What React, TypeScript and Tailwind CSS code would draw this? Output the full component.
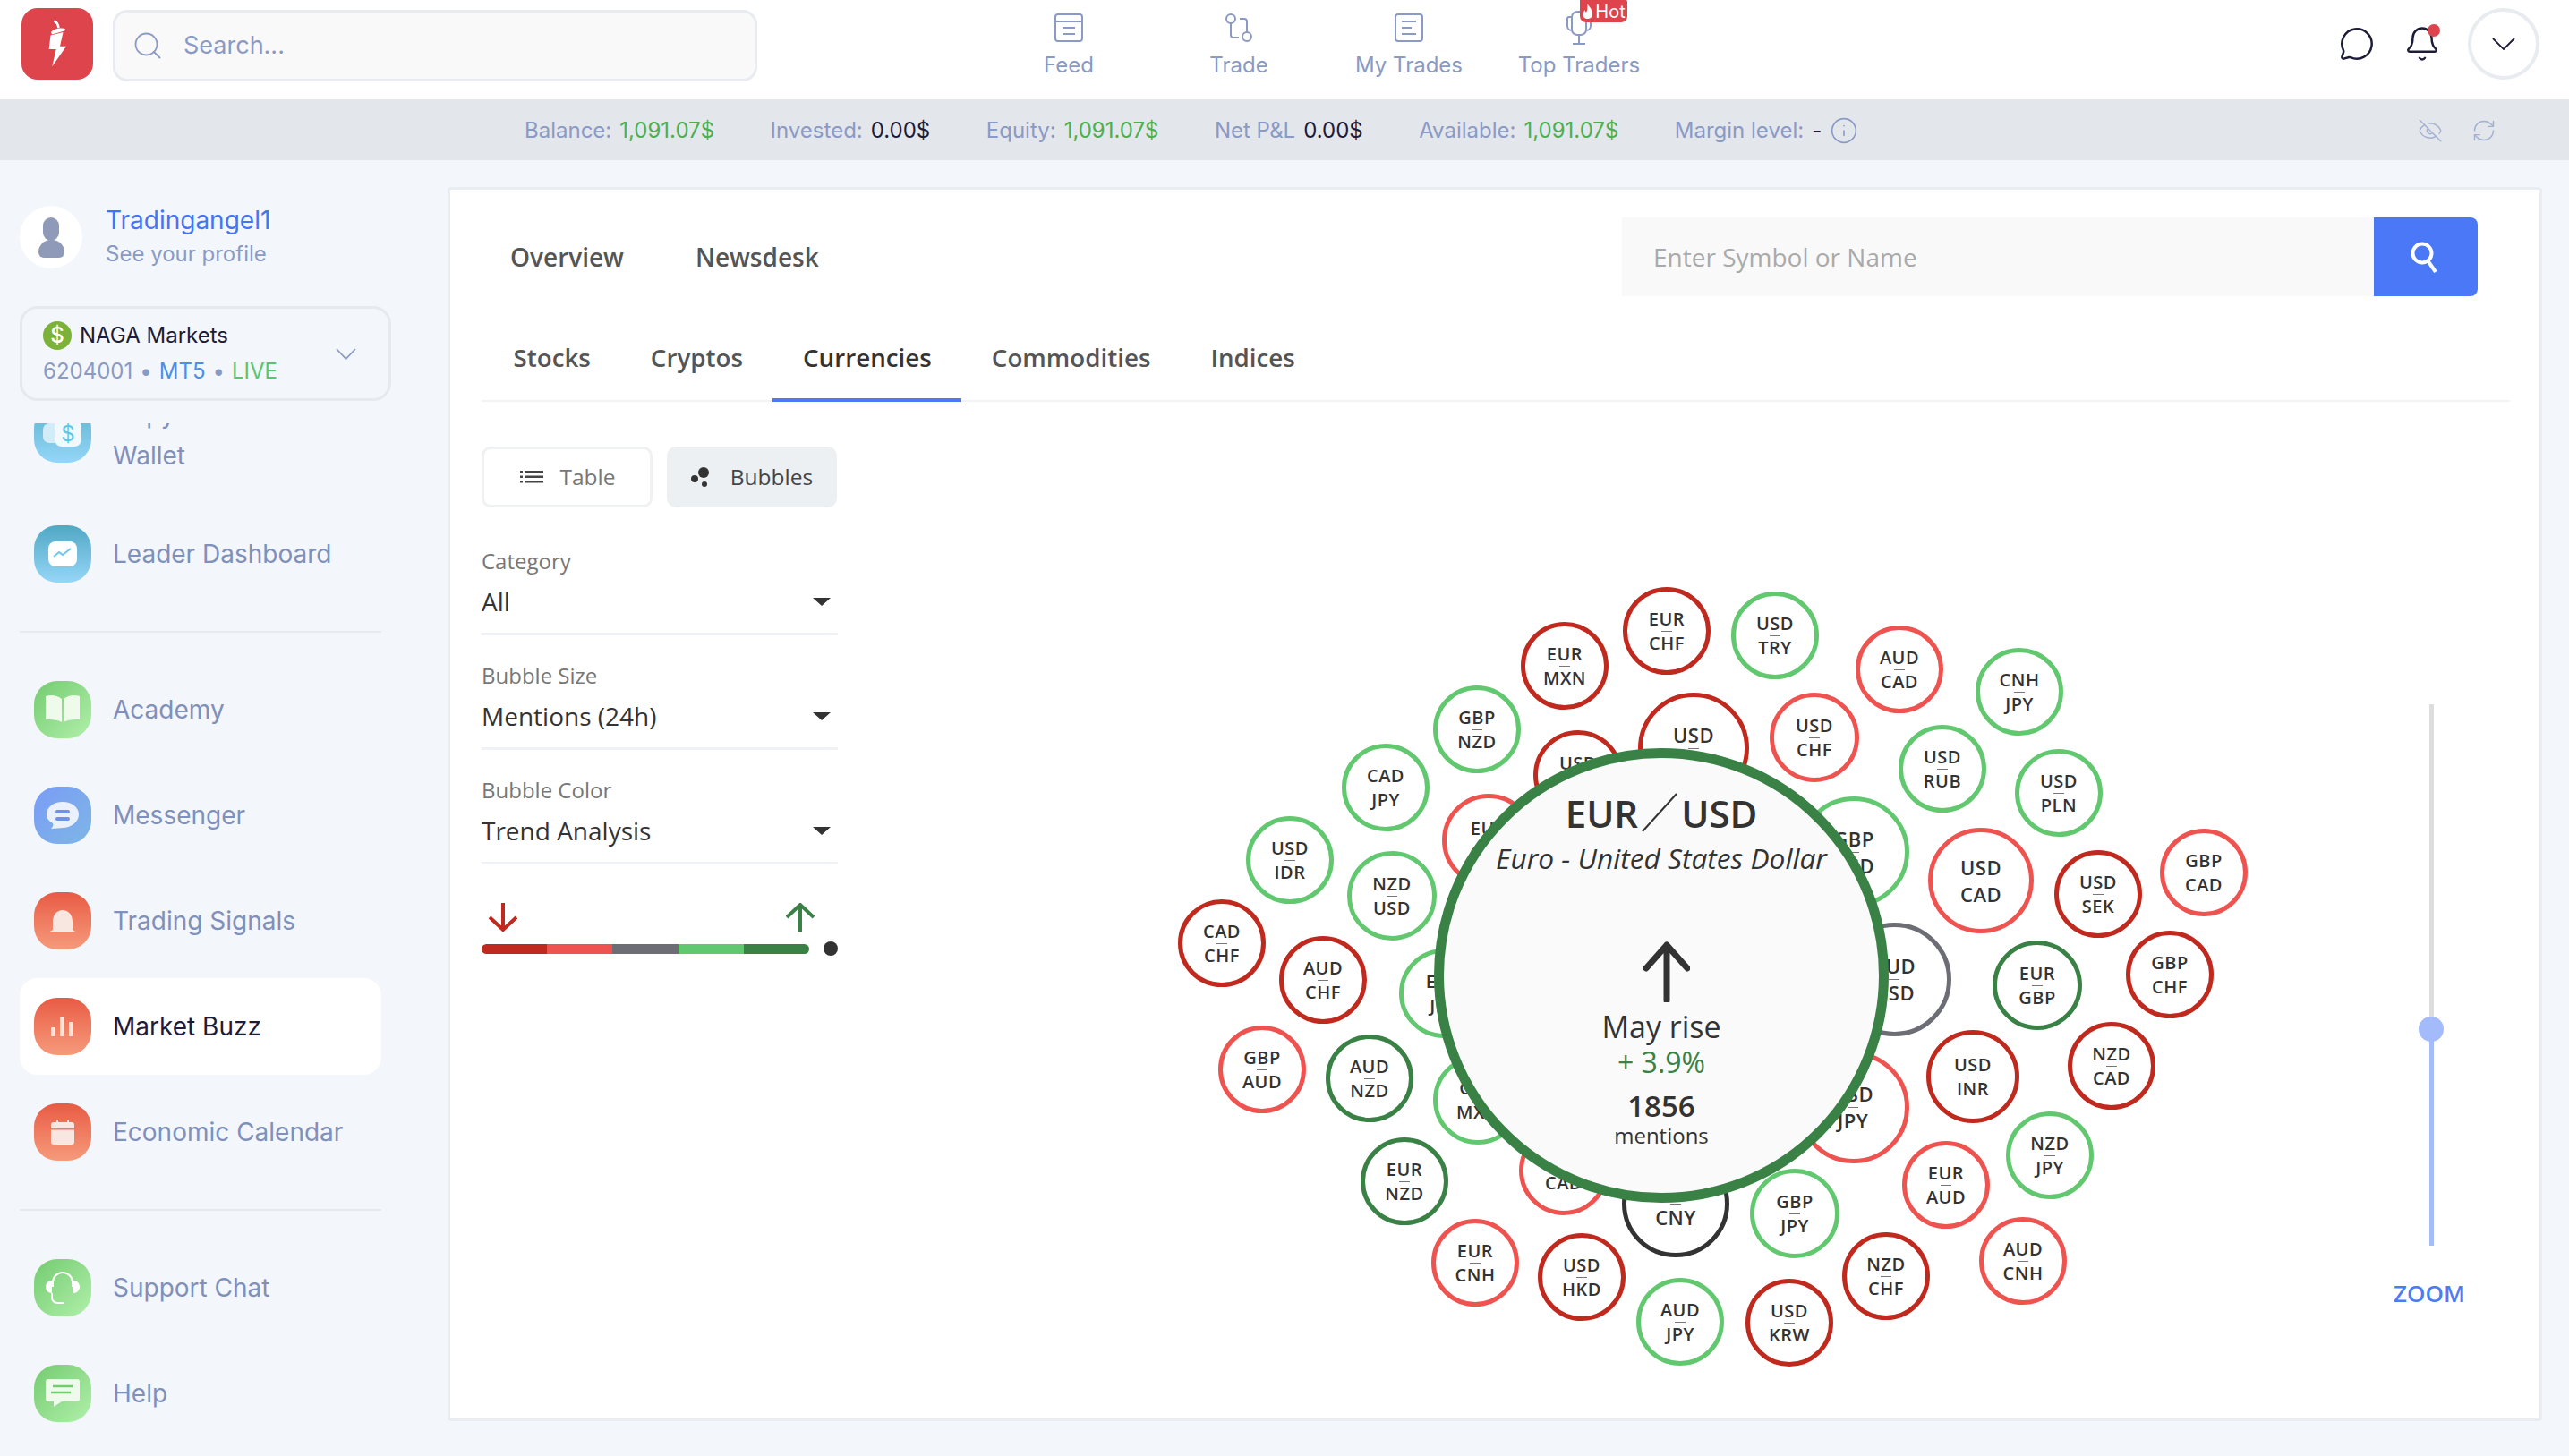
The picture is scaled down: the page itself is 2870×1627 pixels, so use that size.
import { Info, EyeOff, RefreshCw, Search, MessageCircle, Bell } from 'lucide-react';

const OX = 503;
const OY = 212;

const DR = 'border-[#c0291e]';
const LR = 'border-[#ef5350]';
const LG = 'border-[#62c870]';
const DG = 'border-[#3a8146]';
const GR = 'border-[#6d6d75]';
const BK = 'border-[#333333]';

const bubbles: [string, string, number, number, number, string][] = [
  ['EUR', 'CHF', 1862, 705, 98, DR],
  ['USD', 'TRY', 1983, 710, 98, LG],
  ['EUR', 'MXN', 1748, 744, 98, DR],
  ['AUD', 'CAD', 2122, 748, 98, LR],
  ['CNH', 'JPY', 2256, 773, 98, LG],
  ['GBP', 'NZD', 1650, 815, 98, LG],
  ['USD', 'CHF', 2027, 824, 100, LR],
  ['USD', 'RUB', 2170, 859, 98, LG],
  ['USD', 'PLN', 2300, 886, 98, LG],
  ['CAD', 'JPY', 1548, 880, 98, LG],
  ['USD', 'IDR', 1441, 961, 98, LG],
  ['NZD', 'USD', 1555, 1001, 100, LG],
  ['USD', 'CAD', 2213, 984, 118, LR],
  ['USD', 'SEK', 2344, 999, 98, DR],
  ['GBP', 'CAD', 2462, 975, 98, LR],
  ['CAD', 'CHF', 1365, 1054, 98, DR],
  ['AUD', 'CHF', 1478, 1095, 98, DR],
  ['GBP', 'CHF', 2424, 1089, 98, DR],
  ['EUR', 'GBP', 2276, 1101, 100, DG],
  ['GBP', 'AUD', 1410, 1195, 98, LR],
  ['AUD', 'NZD', 1530, 1205, 98, DG],
  ['USD', 'INR', 2204, 1203, 104, DR],
  ['NZD', 'CAD', 2359, 1191, 98, DR],
  ['EUR', 'NZD', 1569, 1320, 98, DG],
  ['EUR', 'AUD', 2174, 1324, 98, LR],
  ['NZD', 'JPY', 2290, 1291, 98, LG],
  ['GBP', 'JPY', 2005, 1356, 100, LG],
  ['EUR', 'CNH', 1648, 1411, 98, LR],
  ['USD', 'HKD', 1767, 1427, 98, DR],
  ['NZD', 'CHF', 2107, 1426, 98, DR],
  ['AUD', 'CNH', 2260, 1409, 98, LR],
  ['AUD', 'JPY', 1877, 1477, 98, LG],
  ['USD', 'KRW', 1999, 1478, 98, DR],
  ['USD', 'MXN', 1763, 866, 100, DR],
  ['EUR', 'GBP', 1663, 939, 104, LR],
  ['USD', 'JPY', 1892, 836, 124, DR],
  ['EUR', 'JPY', 1613, 1110, 100, LG],
  ['GBP', 'MXN', 1651, 1229, 100, LG],
  ['EUR', 'CAD', 1747, 1308, 100, LR],
  ['USD', 'CNY', 1872, 1345, 120, BK],
  ['GBP', 'USD', 2071, 952, 124, LG],
  ['AUD', 'USD', 2116, 1094, 127, GR],
  ['USD', 'JPY', 2070, 1237, 125, LR],
];

const FeedIcon = () => (
  <svg width="32" height="32" viewBox="0 0 32 32" fill="none" stroke="#8a9ac4" strokeWidth="2">
    <rect x="1" y="1" width="30" height="30" rx="3" />
    <path d="M1 9h30M9 16h14M9 23h14" />
  </svg>
);

const TradeIcon = () => (
  <svg width="32" height="32" viewBox="0 0 32 32" fill="none" stroke="#8a9ac4" strokeWidth="2">
    <circle cx="7" cy="6" r="5" />
    <circle cx="25" cy="26" r="5" />
    <path d="M7 11v13a3 3 0 0 0 3 3h6M17 6h5a3 3 0 0 1 3 3v12" />
  </svg>
);

const TradesIcon = () => (
  <svg width="32" height="32" viewBox="0 0 32 32" fill="none" stroke="#8a9ac4" strokeWidth="2">
    <rect x="1" y="1" width="30" height="30" rx="3" />
    <path d="M8 9h16M8 16h11M8 23h16" />
  </svg>
);

const TopTradersIcon = () => (
  <svg width="30" height="38" viewBox="0 0 30 38" fill="none" stroke="#8a9ac4" strokeWidth="2">
    <rect x="7" y="1" width="16" height="26" rx="6" />
    <path d="M7 7H4a2 2 0 0 0-2 2v8a5 5 0 0 0 5 5M23 7h3a2 2 0 0 1 2 2v8a5 5 0 0 1-5 5M15 27v9M8 37h14" />
  </svg>
);

const Logo = () => (
  <svg width="80" height="80" viewBox="0 0 80 80" className="shrink-0">
    <rect width="80" height="80" rx="18" fill="#dd444c" />
    <path d="M36.500 14.500C40 16 41 19 41.500 22" fill="none" stroke="#fff" strokeWidth="2.500" />
    <path d="M33 27c3-4 12-6 16.500-3L48 25.500l-14 4Z" fill="#fff" />
    <path d="M32.500 30.500L46.500 27 43 42.700h7L34.300 65.300 38.700 46h-8Z" fill="#fff" />
  </svg>
);

const Chevron = ({ w, h, color }: { w: number; h: number; color: string }) => (
  <svg width={w} height={h} viewBox={`0 0 ${w} ${h}`} fill="none" stroke={color} strokeWidth="1.800">
    <path d={`M1 1L${w / 2} ${h - 1}L${w - 1} 1`} />
  </svg>
);

const NavIcon = ({ bg, children }: { bg: string; children: React.ReactNode }) => (
  <div className={`w-[64px] h-[64px] rounded-[26px] shrink-0 flex items-center justify-center ${bg}`}>
    {children}
  </div>
);

const BLUE = 'bg-linear-to-b from-[#4fa8c5] to-[#95d6f7]';
const GREEN = 'bg-linear-to-br from-[#74cb70] to-[#b0f0aa]';
const ORANGE = 'bg-linear-to-b from-[#e85a44] to-[#f59a7b]';

const navTop = [
  {
    label: 'Leader Dashboard',
    bg: BLUE,
    icon: (
      <svg width="32" height="28" viewBox="0 0 32 28">
        <rect width="32" height="28" rx="8" fill="#fff" />
        <path d="M6 17l6-5 4 3 9-7" fill="none" stroke="#6cc8e6" strokeWidth="2" />
      </svg>
    ),
  },
];

const navMiddle = [
  {
    label: 'Academy',
    bg: GREEN,
    icon: (
      <svg width="38" height="32" viewBox="0 0 38 32">
        <path d="M0 1c6-2 13-1 18 3v26C13 27 6 27 0 27ZM38 1c-6-2-13-1-18 3v26c5-3 12-3 18-3Z" fill="#eefbea" />
      </svg>
    ),
  },
  {
    label: 'Messenger',
    bg: 'bg-linear-to-br from-[#7a9cf5] to-[#7eb6e6]',
    icon: (
      <svg width="38" height="32" viewBox="0 0 38 32">
        <path d="M19 1c10 0 18 6 18 14s-8 15-18 15c-3 0-8 1-13 1 2-2 3-4 2-6C3 22 1 19 1 15 1 7 9 1 19 1Z" fill="#eaf1fc" />
        <rect x="11" y="10" width="16" height="4" rx="2" fill="#6d93e8" />
        <rect x="11" y="18" width="16" height="4" rx="2" fill="#6d93e8" />
      </svg>
    ),
  },
  {
    label: 'Trading Signals',
    bg: ORANGE,
    icon: (
      <svg width="30" height="26" viewBox="0 0 30 26">
        <path d="M4 23V14C4 6 9 1 15 1s11 5 11 13v9l3 2H1Z" fill="#f8e6e0" />
      </svg>
    ),
  },
  {
    label: 'Market Buzz',
    bg: ORANGE,
    active: true,
    icon: (
      <svg width="26" height="22" viewBox="0 0 26 22" fill="#fbe3da">
        <rect x="0" y="12" width="5" height="10" rx="1" />
        <rect x="10" y="0" width="5" height="22" rx="1" />
        <rect x="20" y="6" width="5" height="16" rx="1" />
      </svg>
    ),
  },
  {
    label: 'Economic Calendar',
    bg: ORANGE,
    icon: (
      <svg width="26" height="28" viewBox="0 0 26 28" fill="#f8e6e0">
        <path d="M6 0h2v3H6zM18 0h2v3h-2z" />
        <rect x="0" y="3" width="26" height="25" rx="3" />
        <path d="M0 10h26v1.500H0z" fill="#ee7a60" />
      </svg>
    ),
  },
];

const navBottom = [
  {
    label: 'Support Chat',
    bg: GREEN,
    icon: (
      <svg width="38" height="38" viewBox="0 0 38 38">
        <path d="M8 18V13a11 11 0 0 1 22 0v5" fill="none" stroke="#fff" strokeWidth="2" />
        <path d="M7 11v14C3 25 0 22 0 18s3-7 7-7ZM31 11v14c4 0 7-3 7-7s-3-7-7-7Z" fill="#fff" />
        <path d="M7 25v5a6 6 0 0 0 6 6h8" fill="none" stroke="#fff" strokeWidth="2" />
      </svg>
    ),
  },
  {
    label: 'Help',
    bg: GREEN,
    icon: (
      <svg width="38" height="32" viewBox="0 0 38 32">
        <path d="M3 0h32a3 3 0 0 1 3 3v19a3 3 0 0 1-3 3H18l-9 6v-6H3a3 3 0 0 1-3-3V3a3 3 0 0 1 3-3Z" fill="#eefbea" />
        <path d="M8 8h22M6 15h22" stroke="#74cb70" strokeWidth="2.500" />
      </svg>
    ),
  },
];

const NavRow = ({ item }: { item: { label: string; bg: string; icon: React.ReactNode; active?: boolean } }) => (
  <div className={`h-[108px] rounded-[20px] pl-[16px] flex items-center gap-[24px] ${item.active ? 'bg-white text-[#1c1c38]' : 'text-[#7f90bb]'}`}>
    <NavIcon bg={item.bg}>{item.icon}</NavIcon>
    <span className="text-[28px]">{item.label}</span>
  </div>
);

const Divider = () => <div className="h-[2px] bg-[#e6e9ee] my-[32px]" />;

const Stat = ({ label, value, color }: { label: string; value: string; color: string }) => (
  <div className="flex items-center gap-[9px]">
    <span className="text-[#8a9ac4]">{label}</span>
    <span className={color}>{value}</span>
  </div>
);

const Select = ({ label, value }: { label: string; value: string }) => (
  <div className="h-[128px] w-[398px] pt-[1px]">
    <div className="h-[34px] flex items-center text-[24px] text-[#777777]">{label}</div>
    <div className="h-[46px] mt-[5px] flex items-center justify-between pr-[8px] text-[28px] text-[#333333]">
      {value}
      <span className="w-0 h-0 border-x-[10px] border-x-transparent border-t-[9px] border-t-[#333333]" />
    </div>
  </div>
);

export default function App() {
  return (
    <div className="w-[2870px] h-[1627px] overflow-hidden bg-[#f3f6fa] font-['Inter',sans-serif]">
      <header className="h-[111px] bg-white flex items-start pt-[9px] pl-[24px] pr-[33px]">
        <Logo />
        <div className="ml-[22px] mt-[2px] w-[720px] h-[80px] bg-[#f9f9fa] border-[3px] border-[#e8ebf0] rounded-[16px] flex items-center pl-[18px] gap-[22px] text-[27px] text-[#8a9ac4]">
          <Search size={36} strokeWidth={1.2} />
          Search...
        </div>
        <nav className="ml-[253px] -mt-[9px] flex text-[24px] text-[#8a9ac4]">
          {[
            ['Feed', <FeedIcon key="f" />],
            ['Trade', <TradeIcon key="t" />],
            ['My Trades', <TradesIcon key="m" />],
          ].map(([label, icon]) => (
            <div key={label as string} className="w-[190px] flex flex-col items-center pt-[15px]">
              <div className="h-[32px]">{icon}</div>
              <div className="h-[30px] mt-[11px] flex items-center">{label}</div>
            </div>
          ))}
          <div className="w-[190px] flex flex-col items-center pt-[15px] relative">
            <div className="h-[32px] -mt-[3px] mb-[3px]"><TopTradersIcon /></div>
            <div className="h-[30px] mt-[11px] flex items-center">Top Traders</div>
            <div className="absolute left-[96px] top-0 w-[53px] h-[25px] bg-[#dd444c] rounded-b-[7px] rounded-tr-[2px] flex items-center justify-center gap-[2px] text-[20px] text-white">
              <svg width="13" height="17" viewBox="0 0 12 17" fill="#fff">
                <path d="M6 0c1 3 5 5 5 10a5 5 0 0 1-5 7c-3 0-5-2-5-5 0-2 1-3 2-5 0 2 1 3 2 2 1-2 1-6 1-9Z" />
              </svg>
              Hot
            </div>
          </div>
        </nav>
        <div className="ml-auto flex items-center">
          <MessageCircle size={40} strokeWidth={1.5} className="text-[#1c1c38]" />
          <div className="relative ml-[32px]">
            <Bell size={42} strokeWidth={1.4} className="text-[#1c1c38]" />
            <span className="absolute right-[1px] -top-[1px] w-[14px] h-[14px] rounded-full bg-[#dd444c]" />
          </div>
          <div className="ml-[30px] w-[80px] h-[80px] rounded-full border-[4px] border-[#e8ebf0] flex items-center justify-center">
            <Chevron w={26} h={14} color="#1c1c38" />
          </div>
        </div>
      </header>

      <div className="h-[68px] bg-[#e3e6eb] flex items-center pt-[2px] pl-[586px] pr-[81px] gap-[62.500px] text-[24px]">
        <Stat label="Balance:" value="1,091.07$" color="text-[#4cae4f]" />
        <Stat label="Invested:" value="0.00$" color="text-[#1c1c38]" />
        <Stat label="Equity:" value="1,091.07$" color="text-[#4cae4f]" />
        <Stat label="Net P&L" value="0.00$" color="text-[#1c1c38]" />
        <Stat label="Available:" value="1,091.07$" color="text-[#4cae4f]" />
        <div className="flex items-center gap-[9px] text-[#8a9ac4]">
          Margin level:
          <span className="text-[#1c1c38]">-</span>
          <Info size={32} strokeWidth={1.2} />
        </div>
        <div className="ml-auto flex items-center gap-[32px] text-[#a3b0d0]">
          <EyeOff size={28} strokeWidth={1.2} />
          <RefreshCw size={28} strokeWidth={1.2} />
        </div>
      </div>

      <div className="flex h-[1448px]">
        <aside className="w-[500px] shrink-0 flex flex-col">
          <div className="pt-[51px] pl-[22px] flex items-center gap-[26px]">
            <div className="w-[70px] h-[70px] rounded-full bg-white flex flex-col items-center justify-center">
              <span className="w-[18px] h-[26px] rounded-full bg-[#8f9ab8]" />
              <span className="w-[29px] h-[20px] -mt-[1px] rounded-t-[14px] rounded-b-[6px] bg-[#8f9ab8]" />
            </div>
            <div className="-mt-[3px]">
              <div className="text-[28px] leading-[34px] text-[#4474f3]">Tradingangel1</div>
              <div className="text-[24px] leading-[30px] mt-[6px] text-[#8a9ac4]">See your profile</div>
            </div>
          </div>

          <div className="ml-[22px] mt-[42px] w-[415px] h-[106px] border-[3px] border-[#e6e9ee] rounded-[20px] pl-[23px] pr-[36px] flex items-center justify-between">
            <div>
              <div className="flex items-center gap-[9px] text-[24px] text-[#1c1c38] h-[34px] -mt-[2px]">
                <span className="w-[32px] h-[32px] rounded-full bg-[#7cb23a] text-white text-[24px] font-medium flex items-center justify-center">$</span>
                NAGA Markets
              </div>
              <div className="text-[24px] h-[30px] mt-[8px] text-[#8a9ac4] flex items-center gap-[8px]">
                6204001 <span>•</span> <span className="text-[#4a8fe8]">MT5</span> <span>•</span> <span className="text-[#5cc46a]">LIVE</span>
              </div>
            </div>
            <Chevron w={23} h={13} color="#8a9ac4" />
          </div>

          <div className="mt-[25px] pl-[22px] w-[426px] flex-1 overflow-hidden">
            <div className="h-[108px] -mt-[42px] mb-[26px] pl-[16px] flex items-center gap-[24px] text-[#7f90bb]">
              <NavIcon bg="bg-linear-to-b from-[#5bb3d0] to-[#95d6f7]">
                <svg width="44" height="36" viewBox="0 0 44 36">
                  <rect x="0" y="6" width="24" height="22" rx="7" fill="#d2ecf8" />
                  <rect x="13" y="2" width="30" height="30" rx="8" fill="#f0f9fd" />
                  <text x="28" y="26" textAnchor="middle" fontSize="24" fill="#5cc6e6">$</text>
                </svg>
              </NavIcon>
              <span className="text-[28px] leading-[46px] pt-[1px]">Copy<br />Wallet</span>
            </div>
            {navTop.map((item) => <NavRow key={item.label} item={item} />)}
            <Divider />
            <div className="flex flex-col gap-[10px]">
              {navMiddle.map((item) => <NavRow key={item.label} item={item} />)}
            </div>
            <Divider />
            <div className="flex flex-col gap-[10px]">
              {navBottom.map((item) => <NavRow key={item.label} item={item} />)}
            </div>
          </div>
        </aside>

        <main className="relative mt-[30px] w-[2340px] h-[1379px] bg-white border-[3px] border-[#e9ecf1] rounded-[4px] pl-[35px] pr-[33px] font-['Open_Sans',sans-serif]">
          <div className="h-[121px] pt-[31px] flex">
            <div className="h-[88px] w-[1274px] shrink-0 flex items-center gap-[80px] pl-[32px] text-[28px] font-semibold text-[#555555]">
              <span>Overview</span>
              <span>Newsdesk</span>
            </div>
            <div className="flex">
              <div className="w-[840px] h-[88px] bg-[#f9f9f9] pl-[35px] flex items-center text-[28px] text-[#aaaaaa]">
                Enter Symbol or Name
              </div>
              <div className="w-[116px] h-[88px] bg-[#4a78f6] rounded-r-[8px] flex items-center justify-center">
                <svg width="36" height="36" viewBox="0 0 36 36" fill="none" stroke="#fff" strokeWidth="4">
                  <circle cx="14" cy="14" r="10.500" />
                  <path d="M20 22l9 13" />
                </svg>
              </div>
            </div>
          </div>

          <div className="border-b-[2px] border-[#f2f3f5] h-[116px] pl-[2px] flex items-end text-[27.750px] font-semibold text-[#555555]">
            {['Stocks', 'Cryptos', 'Currencies', 'Commodities', 'Indices'].map((t) => (
              <div
                key={t}
                className={`h-[90px] -mb-[2px] px-[33.500px] pb-[4px] flex items-center border-b-[4px] ${t === 'Currencies' ? 'border-[#4a78f6] text-[#333333]' : 'border-transparent'}`}
              >
                {t}
              </div>
            ))}
          </div>

          <div className="flex gap-[16px] mt-[50px] text-[24.500px]">
            <div className="w-[191px] h-[68px] border-[3px] border-[#f0f1f3] rounded-[10px] flex items-center justify-center gap-[18px] text-[#777777] pl-[2px]">
              <svg width="26" height="14" viewBox="0 0 26 14" fill="#444444">
                <path d="M0 0h3v2.500H0zM5 0h21v2.500H5zM0 5.500h3V8H0zM5 5.500h21V8H5zM0 11h3v2.500H0zM5 11h21v2.500H5z" />
              </svg>
              Table
            </div>
            <div className="w-[190px] h-[68px] bg-[#edf0f3] rounded-[10px] flex items-center justify-center gap-[22px] text-[#444444]">
              <svg width="22" height="22" viewBox="0 0 22 22" fill="#333333">
                <circle cx="4" cy="13" r="4" />
                <circle cx="14" cy="6" r="6" />
                <circle cx="15" cy="19" r="3" />
              </svg>
              Bubbles
            </div>
          </div>

          <div className="mt-[42px]">
            {[
              ['Category', 'All'],
              ['Bubble Size', 'Mentions (24h)'],
              ['Bubble Color', 'Trend Analysis'],
            ].map(([l, v]) => (
              <div key={l} className="relative">
                <Select label={l} value={v} />
                <div className="absolute left-0 top-[98px] w-[398px] h-[3px] bg-[#f0f2f5]" />
              </div>
            ))}
          </div>

          <div className="w-[398px] mt-[16px]">
            <div className="h-[34px] flex justify-between pl-[8px] pr-[26px]">
              <svg width="32" height="32" viewBox="0 0 32 32" fill="none" stroke="#c0291e" strokeWidth="4">
                <path d="M16 0v30M1 16l15 14 15-14" />
              </svg>
              <svg width="32" height="32" viewBox="0 0 32 32" fill="none" stroke="#3a8146" strokeWidth="4">
                <path d="M16 32V2M1 16L16 2l15 14" />
              </svg>
            </div>
            <div className="mt-[9px] flex items-center justify-between">
              <div className="w-[366px] h-[11px] rounded-full overflow-hidden flex">
                <div className="flex-1 bg-[#c0291e]" />
                <div className="flex-1 bg-[#ef5350]" />
                <div className="flex-1 bg-[#6d6d75]" />
                <div className="flex-1 bg-[#62c870]" />
                <div className="flex-1 bg-[#3a8146]" />
              </div>
              <div className="w-[16px] h-[16px] rounded-full bg-[#333333]" />
            </div>
          </div>

          {bubbles.map(([a, b, x, y, d, c], i) => (
            <div
              key={i}
              className={`absolute rounded-full bg-white border-[5px] flex flex-col items-center justify-center font-semibold tracking-[0.5px] text-[#333333] ${c} ${d > 110 ? 'text-[22px] leading-[29px]' : 'text-[20px] leading-[26px]'}`}
              style={{ left: x - d / 2 - OX, top: y - d / 2 - OY, width: d, height: d }}
            >
              <span>{a}</span>
              <span className="w-[12px] h-[1px] bg-[#777777]" />
              <span>{b}</span>
            </div>
          ))}

          <div
            className="absolute w-[508px] h-[508px] rounded-full bg-[#fafafa] border-[11px] border-[#3a8146] flex flex-col items-center text-[#333333]"
            style={{ left: 1856 - 254 - OX, top: 1090 - 254 - OY }}
          >
            <div className="mt-[33px] h-[56px] flex items-center text-[42px] font-semibold">
              EUR
              <svg width="46" height="46" viewBox="0 0 46 46" className="mx-[1px]">
                <path d="M4 44L42 2" stroke="#333333" strokeWidth="2" />
              </svg>
              USD
            </div>
            <div className="mt-[1px] text-[31.700px] italic leading-[44px]">Euro - United States Dollar</div>
            <svg width="52" height="68" viewBox="0 0 52 68" className="mt-[71px] ml-[12px]" fill="none" stroke="#333333" strokeWidth="7" strokeLinecap="round">
              <path d="M26 66V4M3 30L26 4l23 26" strokeLinejoin="round" />
            </svg>
            <div className="mt-[4px] text-[34px] leading-[46px]">May rise</div>
            <div className="text-[32px] leading-[34px] text-[#3a8146]">+ 3.9%</div>
            <div className="mt-[10px] text-[33px] leading-[44px] font-semibold">1856</div>
            <div className="text-[24px] leading-[32px] -mt-[5px]">mentions</div>
          </div>

          <div className="absolute left-[2211px] top-[575px] w-[5px] h-[363px] bg-[#dddddd]" />
          <div className="absolute left-[2211px] top-[938px] w-[5px] h-[242px] bg-[#a6bcf8]" />
          <div className="absolute left-[2199px] top-[924px] w-[28px] h-[28px] rounded-full bg-[#a3bbfa]" />
          <div className="absolute left-[2171px] top-[1215px] text-[26px] leading-[36px] font-semibold text-[#4a7cf5]">ZOOM</div>
        </main>
      </div>
    </div>
  );
}
